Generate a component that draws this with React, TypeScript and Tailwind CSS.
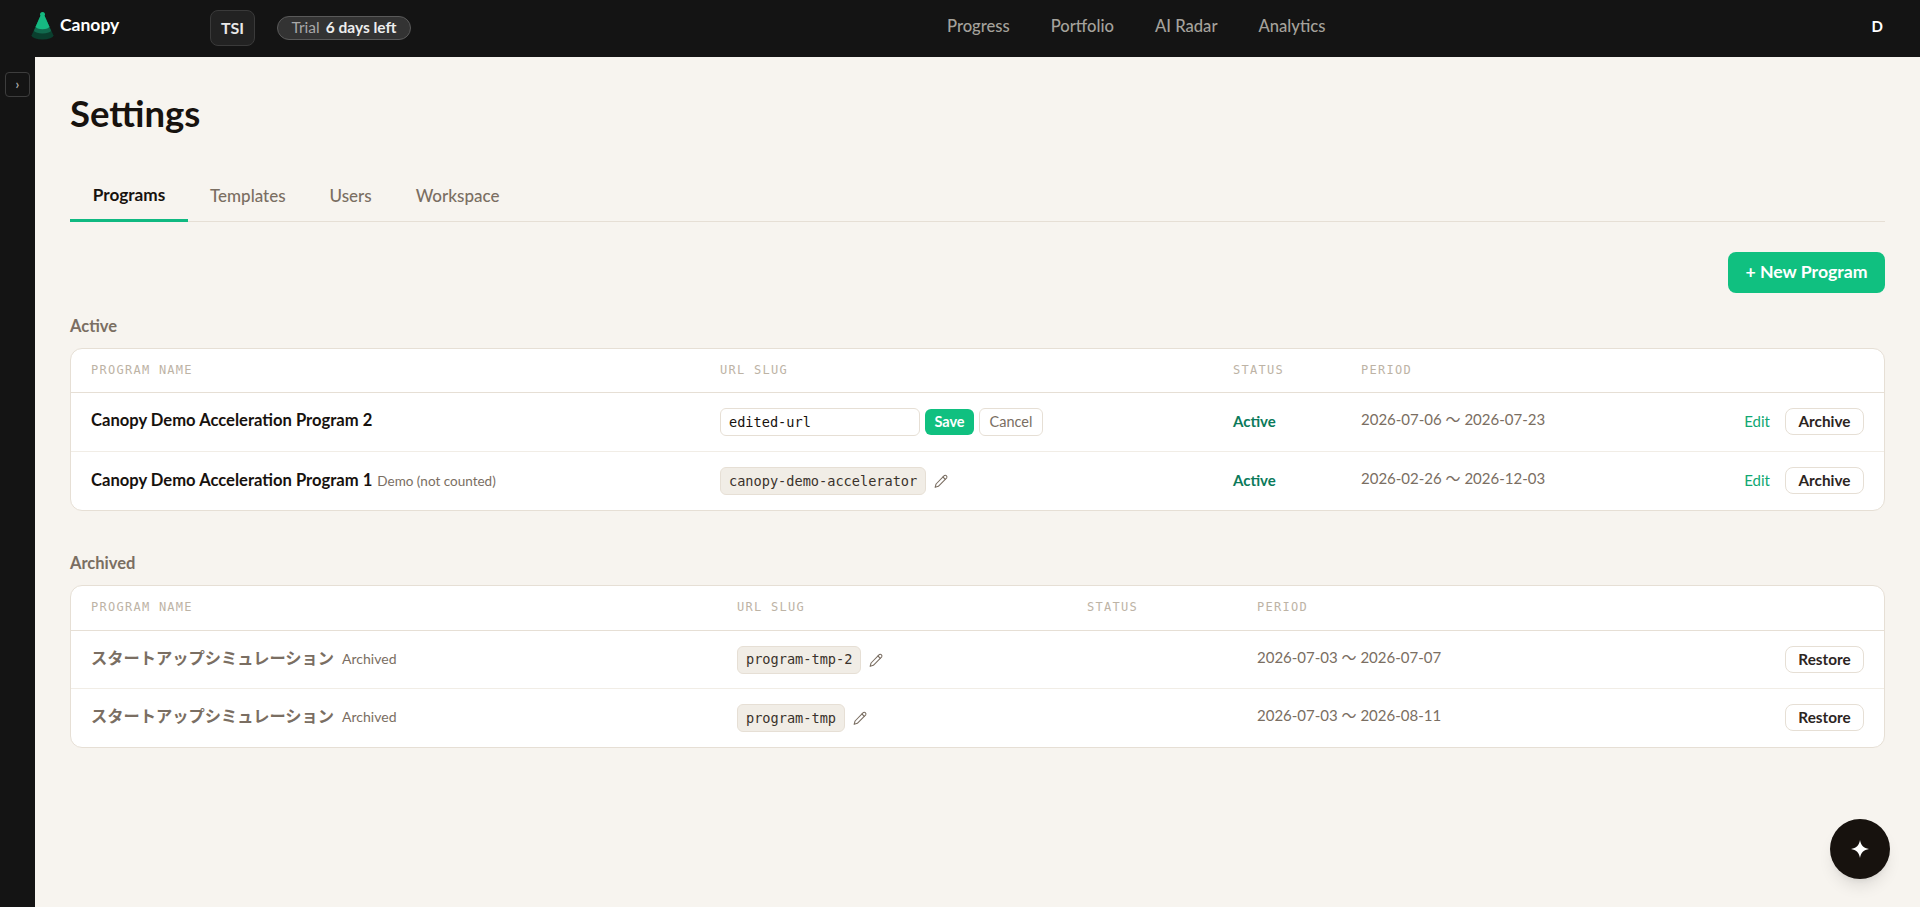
import React from "react";

const sans = "font-['Lato','Noto_Sans_CJK_JP',sans-serif]";
const mono = "font-['DejaVu_Sans_Mono','Liberation_Mono',monospace]";

function Pencil() {
  return (
    <svg viewBox="0 0 24 24" width="16" height="16" fill="none" stroke="#7a6e62" strokeWidth="1.6" strokeLinecap="round" strokeLinejoin="round" className="shrink-0">
      <path d="M17.2 3.6a2.6 2.6 0 0 1 3.4 3.6L8 20l-4.800 1.500L4.600 16.500 17.200 3.600Z" />
      <path d="M15 6l3.400 3.400" />
    </svg>
  );
}

function Logo() {
  return (
    <svg width="23" height="28" viewBox="0 0 23 28" className="shrink-0">
      <circle cx="11.500" cy="2.600" r="2.500" fill="#14b87f" />
      <path d="M9.800 3h3.400L22.500 23.500a11 4 0 0 1-22 0Z" fill="#0a3f2e" />
      <path d="M9.800 3h3.400L20 18.500a8.500 3 0 0 1-17 0Z" fill="#11694d" />
      <path d="M9.800 3h3.400L18.300 14.500a6.800 2.800 0 0 1-13.600 0Z" fill="#16b981" />
    </svg>
  );
}

function Slug({ text }: { text: string }) {
  return (
    <span className={`${mono} inline-flex items-center h-[28px] px-2 rounded-md border border-[#e6dfd5] bg-[#f1ede6] text-[13.6px] text-[#3a322b]`}>
      {text}
    </span>
  );
}

function OutlineBtn({ label, up }: { label: string; up?: boolean }) {
  return (
    <button className={`h-[27px] w-[79px] rounded-lg border border-[#e6dfd5] bg-white text-[15.3px] font-bold text-[#2c251f] ${up ? "-mt-[2px]" : ""}`}>
      {label}
    </button>
  );
}

const headCls = `${mono} text-[12px] tracking-[0.105em] text-[#bdb3a5] -mb-0`;

function ActiveRowEnd({ period }: { period: string }) {
  return (
    <>
      <span className="text-[15px] font-bold text-[#0b7a5a] -mt-0.5">Active</span>
      <span className="text-[15px] text-[#7a6e62] -mt-1.5">{period}</span>
      <span className="flex items-center gap-[15px]">
        <span className="text-[15px] text-[#10a873] -mt-0.5">Edit</span>
        <OutlineBtn label="Archive" up />
      </span>
    </>
  );
}

function ActiveTable() {
  const cols = "grid grid-cols-[629px_513px_128px_1fr_auto] items-center pl-5 pr-5";
  return (
    <div className="rounded-xl border border-[#e6dfd5] bg-white overflow-hidden">
      <div className={`${cols} h-[44px] pb-[2px] border-b border-[#e6dfd5] ${headCls}`}>
        <span>PROGRAM NAME</span>
        <span>URL SLUG</span>
        <span>STATUS</span>
        <span>PERIOD</span>
        <span />
      </div>
      <div className={`${cols} h-[59px] border-b border-[#f1ede6]`}>
        <span className="text-[16.6px] font-bold text-[#17120e] -mt-1">Canopy Demo Acceleration Program 2</span>
        <span className="flex items-center gap-[5px]">
          <input
            readOnly
            value="edited-url"
            className={`${mono} w-[200px] h-[28px] px-2 rounded-md border border-[#e6dfd5] bg-white text-[13.6px] text-[#17120e] outline-none`}
          />
          <button className="h-[26px] w-[49px] rounded-md bg-[#10c080] text-[14.5px] font-bold text-white">Save</button>
          <button className="h-[28px] w-[64px] rounded-md border border-[#e6dfd5] bg-white text-[14.5px] text-[#7a6e62]">Cancel</button>
        </span>
        <ActiveRowEnd period="2026-07-06 〜 2026-07-23" />
      </div>
      <div className={`${cols} h-[58px]`}>
        <span className="flex items-baseline gap-[5px] -mt-0.5">
          <span className="text-[16.6px] font-bold text-[#17120e]">Canopy Demo Acceleration Program 1</span>
          <span className="text-[13.5px] text-[#7a6e62]">Demo (not counted)</span>
        </span>
        <span className="flex items-center gap-[7px]">
          <Slug text="canopy-demo-accelerator" />
          <Pencil />
        </span>
        <ActiveRowEnd period="2026-02-26 〜 2026-12-03" />
      </div>
    </div>
  );
}

function ArchivedRow({ slug, period, last }: { slug: string; period: string; last?: boolean }) {
  return (
    <div className={`grid grid-cols-[646px_350px_170px_1fr_auto] items-center pl-5 pr-5 h-[58px] ${last ? "" : "border-b border-[#f1ede6]"}`}>
      <span className={`flex items-baseline gap-2 ${last ? "-mt-1" : "-mt-0.5"}`}>
        <span className="text-[16.25px] font-bold text-[#7a6e62]">スタートアップシミュレーション</span>
        <span className="text-[14px] text-[#7a6e62]">Archived</span>
      </span>
      <span className="flex items-center gap-[7px]">
        <Slug text={slug} />
        <Pencil />
      </span>
      <span />
      <span className={`text-[15px] text-[#7a6e62] ${last ? "-mt-1.5" : "-mt-1"}`}>{period}</span>
      <OutlineBtn label="Restore" up={last} />
    </div>
  );
}

function ArchivedTable() {
  return (
    <div className="rounded-xl border border-[#e6dfd5] bg-white overflow-hidden">
      <div className={`grid grid-cols-[646px_350px_170px_1fr] items-center pl-5 pr-5 h-[45px] pb-[2px] border-b border-[#e6dfd5] ${headCls}`}>
        <span>PROGRAM NAME</span>
        <span>URL SLUG</span>
        <span>STATUS</span>
        <span>PERIOD</span>
      </div>
      <ArchivedRow slug="program-tmp-2" period="2026-07-03 〜 2026-07-07" />
      <ArchivedRow slug="program-tmp" period="2026-07-03 〜 2026-08-11" last />
    </div>
  );
}

export default function App() {
  return (
    <div className={`${sans} h-[907px] w-full flex flex-col bg-[#141414] overflow-hidden`}>
      <header className="h-[57px] shrink-0 flex items-center pl-[31px] pr-[37px]">
        <span className="flex items-center gap-[6px] w-[179px] -mt-[5px]">
          <Logo />
          <span className="text-[17.5px] font-bold text-white -mt-[1px]">Canopy</span>
        </span>
        <span className="h-[36px] w-[45px] flex items-center justify-center rounded-lg border border-[#3a3a3a] bg-[#222222] text-[16px] font-bold text-[#e8e8e8] -mt-[2px]">TSI</span>
        <span className="ml-[22px] h-[24px] w-[134px] flex items-center justify-center gap-[6px] rounded-full border border-[#5a5a5a] bg-[#333333] text-[15.5px] -mt-[1px]">
          <span className="text-[#a8a8a8]">Trial</span>
          <span className="font-bold text-[#ededed]">6 days left</span>
        </span>
        <nav className="ml-[536px] flex items-center gap-[41px] text-[16.6px] font-medium text-[#a5a29c] -mt-[4px]">
          <span>Progress</span>
          <span>Portfolio</span>
          <span>AI Radar</span>
          <span>Analytics</span>
        </nav>
        <div className="ml-auto text-[15px] font-bold text-white -mt-[4px]">D</div>
      </header>
      <div className="flex-1 flex min-h-0">
        <aside className="w-[35px] shrink-0 pt-[15px] pl-[5px]">
          <button className="w-[25px] h-[25px] rounded-[4px] border border-[#3d3d3d] flex items-center justify-center text-[13px] font-bold leading-none text-[#a8a8a8]">›</button>
        </aside>
        <main className="relative flex-1 bg-[#f7f4ef] pl-[35px] pr-[35px]">
          <h1 className="pt-[34px] text-[36.5px] leading-[44px] font-bold text-[#17120e]">Settings</h1>
          <div className="mt-[35px] flex h-[52px] border-b border-[#e6dfd5] text-[17px] font-medium text-[#7a6e62]">
            <span className="h-[52px] w-[118px] flex items-center justify-center border-b-[3px] border-[#10b981] text-[17.2px] font-bold text-[#17120e]">Programs</span>
            <span className="px-[22px] flex items-center">Templates</span>
            <span className="px-[22px] flex items-center">Users</span>
            <span className="px-[22px] flex items-center">Workspace</span>
          </div>
          <div className="mt-[30px] flex justify-end">
            <button className="h-[41px] w-[157px] rounded-lg bg-[#10c080] text-[17.7px] font-bold text-white">+ New Program</button>
          </div>
          <h2 className="mt-[24px] mb-[13px] text-[16.5px] leading-[18px] font-bold text-[#7a6e62]">Active</h2>
          <ActiveTable />
          <h2 className="mt-[43px] mb-[13px] text-[16.5px] leading-[18px] font-bold text-[#7a6e62]">Archived</h2>
          <ArchivedTable />
          <button className="absolute right-[30px] bottom-[28px] w-[60px] h-[60px] rounded-full bg-[#17120e] shadow-lg flex items-center justify-center">
            <svg width="20" height="20" viewBox="0 0 20 20" fill="#fff"><path d="M10 1c.8 5.200 3.800 8.200 9 9-5.200.8-8.200 3.800-9 9-.8-5.200-3.800-8.200-9-9 5.200-.8 8.200-3.800 9-9Z" /></svg>
          </button>
        </main>
      </div>
    </div>
  );
}
